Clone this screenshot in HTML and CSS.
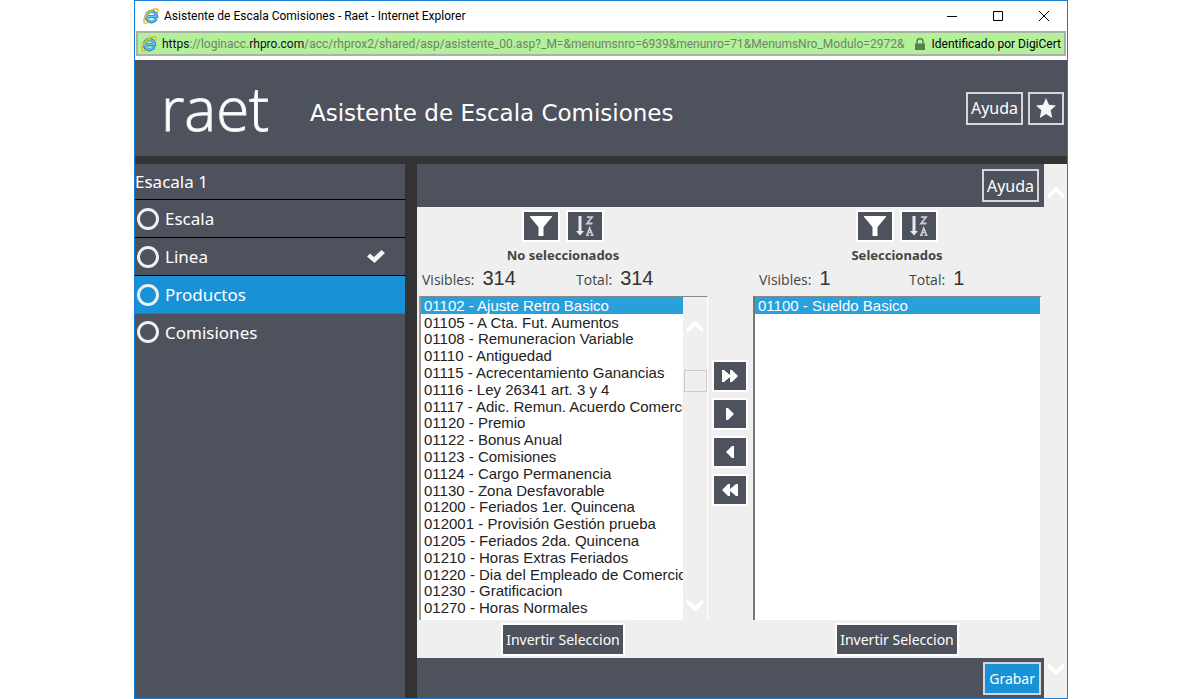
FILE: index.html
```html
<!DOCTYPE html>
<html lang="es">
<head>
<meta charset="utf-8">
<title>Asistente de Escala Comisiones - Raet</title>
<link rel="stylesheet" href="styles.css">
</head>
<body>
<svg class="defs" aria-hidden="true">
  <symbol id="ie" viewBox="0 0 16 16">
    <path d="M13.2 10.7A5.2 5.2 0 1 1 13.6 8.6H5.2" fill="none" stroke="#2b8fd0" stroke-width="3.2"/>
    <path d="M12.6 11.2A4.8 4.8 0 1 1 13.4 8.3H5" fill="none" stroke="#74c8f0" stroke-width="1.2"/>
    <path d="M1.6 14.9C-.6 12.4 3 5.600 8.200 2.500 11.600.4 14.800.2 15 2.200c.1.900-.3 1.800-.8 2.700" fill="none" stroke="#f0b71c" stroke-width="1.500"/>
    <path d="M1.600 14.900c1 .8 2.900.1 4.300-.9" fill="none" stroke="#f0b71c" stroke-width="1.300"/>
  </symbol>
  <symbol id="funnel" viewBox="0 0 22 20"><path d="M0 0H22V1L13.500 11V20H8.500V11L0 1Z" fill="#fff"/></symbol>
  <symbol id="sort" viewBox="0 0 18 20">
    <path d="M2.500 0H5.500V15H8L4 19.500 0 15H2.500Z" fill="#e6e8ec"/>
    <path d="M11 1.200h5L11 7.500h5.500" fill="none" stroke="#c9ccd2" stroke-width="1.800"/>
    <path d="M10 19.300h3M14.500 19.300h3M11 19l2.700-7 2.800 7M12 16.500h3.600" fill="none" stroke="#c9ccd2" stroke-width="1.600"/>
  </symbol>
  <symbol id="up" viewBox="0 0 16 13"><path d="M0 8.500L8 .5l8 8V13L8 6 0 13Z" fill="#fff"/></symbol>
  <symbol id="down" viewBox="0 0 16 13"><path d="M0 4.500l8 8 8-8V0L8 7 0 0Z" fill="#fff"/></symbol>
</svg>

<div class="window">
  <div class="titlebar">
    <svg class="ie"><use href="#ie"/></svg>
    <span class="caption">Asistente de Escala Comisiones - Raet - Internet Explorer</span>
    <button class="wbtn" aria-label="Minimizar"><svg viewBox="0 0 10 10"><path d="M0 5.500H10" stroke="#000"/></svg></button>
    <button class="wbtn" aria-label="Maximizar"><svg viewBox="0 0 10 10"><path d="M.5.5h9v9h-9z" fill="none" stroke="#000"/></svg></button>
    <button class="wbtn" aria-label="Cerrar"><svg viewBox="0 0 10 10"><path d="M0 0L10 10M10 0L0 10" stroke="#000"/></svg></button>
  </div>
  <div class="address">
    <svg class="ie"><use href="#ie"/></svg>
    <span class="url"><b>https</b>://loginacc.<b>rhpro.com</b>/acc/rhprox2/shared/asp/asistente_00.asp?_M=&amp;menumsnro=6939&amp;menunro=71&amp;MenumsNro_Modulo=2972&amp;</span>
    <svg class="lock" viewBox="0 0 10 12"><path d="M0 5.500h10V12H0Z" fill="#5b7f4d"/><path d="M2 6V3.500a3 2.700 0 0 1 6 0V6" fill="none" stroke="#5b7f4d" stroke-width="1.400"/></svg>
    <span class="ident">Identificado por DigiCert</span>
  </div>

  <header class="header">
    <span class="logo">raet</span>
    <h1>Asistente de Escala Comisiones</h1>
    <button class="btn">Ayuda</button>
    <button class="btn star" aria-label="Favorito"><svg viewBox="0 0 20 20"><path d="M10 0l3 6.800 7 .7-5.300 4.800L16.200 20 10 16l-6.200 4 1.500-7.700L0 7.500l7-.7Z" fill="#f6f6f8"/></svg></button>
  </header>

  <div class="frames">
    <nav class="side">
      <div class="side-title">Esacala 1</div>
      <a href="#" class="step"><i class="ring"></i>Escala</a>
      <a href="#" class="step"><i class="ring"></i>Linea<svg class="check" viewBox="0 0 18 13"><path d="M0 6.500L3 3.500 7 7 14.500 0 18 3 7.500 13Z" fill="#f2f3f5"/></svg></a>
      <a href="#" class="step active"><i class="ring"></i>Productos</a>
      <a href="#" class="step last"><i class="ring"></i>Comisiones</a>
    </nav>

    <main class="content">
      <div class="bar top"><button class="btn">Ayuda</button></div>
      <div class="panels">
        <section class="panel">
          <div class="tools">
            <button class="tool" aria-label="Filtrar"><svg class="funnel"><use href="#funnel"/></svg></button>
            <button class="tool" aria-label="Ordenar"><svg class="sort"><use href="#sort"/></svg></button>
          </div>
          <h2 id="unsel">No seleccionados</h2>
          <div class="counts"><span class="count">Visibles: <b>314</b></span><span class="count">Total: <b>314</b></span></div>
          <div class="list">
            <select multiple aria-labelledby="unsel">
              <option class="on">01102 - Ajuste Retro Basico</option>
              <option>01105 - A Cta. Fut. Aumentos</option>
              <option>01108 - Remuneracion Variable</option>
              <option>01110 - Antiguedad</option>
              <option>01115 - Acrecentamiento Ganancias</option>
              <option>01116 - Ley 26341 art. 3 y 4</option>
              <option>01117 - Adic. Remun. Acuerdo Comercio</option>
              <option>01120 - Premio</option>
              <option>01122 - Bonus Anual</option>
              <option>01123 - Comisiones</option>
              <option>01124 - Cargo Permanencia</option>
              <option>01130 - Zona Desfavorable</option>
              <option>01200 - Feriados 1er. Quincena</option>
              <option>012001 - Provisión Gestión prueba</option>
              <option>01205 - Feriados 2da. Quincena</option>
              <option>01210 - Horas Extras Feriados</option>
              <option>01220 - Dia del Empleado de Comercio</option>
              <option>01230 - Gratificacion</option>
              <option>01270 - Horas Normales</option>
              <option>01271 - Hs Extras 50%</option>
            </select>
            <div class="scroll inner"><svg class="chev"><use href="#up"/></svg><span class="thumb"></span><svg class="chev"><use href="#down"/></svg></div>
          </div>
          <button class="btn small invert">Invertir Seleccion</button>
        </section>

        <div class="moves">
          <button class="move" aria-label="Agregar todos"><svg viewBox="0 0 16 12"><path d="M0 0h2l6 5V0h2l6 6-6 6H8V7l-6 5H0Z" fill="#fff"/></svg></button>
          <button class="move" aria-label="Agregar"><svg viewBox="0 0 16 12"><path d="M4 0h2l6 6-6 6H4Z" fill="#fff"/></svg></button>
          <button class="move" aria-label="Quitar"><svg viewBox="0 0 16 12"><path d="M12 0h-2L4 6l6 6h2Z" fill="#fff"/></svg></button>
          <button class="move" aria-label="Quitar todos"><svg viewBox="0 0 16 12"><path d="M16 0h-2L8 5V0H6L0 6l6 6h2V7l6 5h2Z" fill="#fff"/></svg></button>
        </div>

        <section class="panel">
          <div class="tools">
            <button class="tool" aria-label="Filtrar"><svg class="funnel"><use href="#funnel"/></svg></button>
            <button class="tool" aria-label="Ordenar"><svg class="sort"><use href="#sort"/></svg></button>
          </div>
          <h2 id="sel">Seleccionados</h2>
          <div class="counts chosen"><span class="count">Visibles: <b>1</b></span><span class="count">Total: <b>1</b></span></div>
          <div class="list picked">
            <select multiple aria-labelledby="sel">
              <option class="on">01100 - Sueldo Basico</option>
            </select>
          </div>
          <button class="btn small invert">Invertir Seleccion</button>
        </section>
      </div>
      <div class="bar bottom"><button class="btn small save">Grabar</button></div>
    </main>
    <div class="scroll outer"><svg class="chev"><use href="#up"/></svg><svg class="chev"><use href="#down"/></svg></div>
  </div>
</div>
</body>
</html>
```

FILE: styles.css
```css
* { box-sizing: border-box; }
body {
  margin: 0;
  padding: 0 132px 0 134px;
  background: #fff;
  font-family: "Open Sans", "Noto Sans", sans-serif;
}
button { margin: 0; padding: 0; border: 0; background: none; font: inherit; }
svg { display: block; flex: none; }
.defs { position: absolute; width: 0; height: 0; }

.window {
  display: flex;
  flex-direction: column;
  min-height: 100vh;
  border: 1px solid #1a7fd4;
}

.titlebar {
  display: flex;
  align-items: center;
  height: 29px;
  padding-left: 8px;
  font-family: Roboto, sans-serif;
  font-size: 12px;
}
.ie { width: 16px; height: 16px; }
.caption { flex: 1; margin-left: 5px; }
.wbtn { display: flex; align-items: center; justify-content: center; width: 46px; height: 28px; }
.wbtn svg { width: 10px; height: 10px; overflow: visible; }

.address {
  display: flex;
  align-items: center;
  height: 25px;
  margin: 1px 1px 4px;
  padding: 0 3px;
  border: 2px solid #a9b3a4;
  background: #b2f09a;
  font-family: Roboto, sans-serif;
  font-size: 12px;
  white-space: nowrap;
}
.url { flex: 1; min-width: 0; margin-left: 5px; overflow: hidden; color: #6f8468; }
.url b { color: #111; font-weight: 400; }
.lock { width: 10px; height: 12px; margin: 0 7px 0 10px; }

.header {
  display: flex;
  align-items: center;
  height: 96px;
  padding-right: 3px;
  background: #4e525d;
  color: #fff;
}
.logo {
  width: 149px;
  margin-left: 26px;
  font-family: "Open Sans", sans-serif;
  font-size: 60px;
  font-weight: 300;
  line-height: 88px;
  -webkit-text-stroke: 1px #f0f0f2;
}
h1 { flex: 1; margin: 9px 0 0; font: 400 23px/30px "DejaVu Sans", sans-serif; white-space: nowrap; }
.btn {
  height: 33px;
  padding: 0 3px;
  border: 2px solid #d4d6da;
  background: #4e525d;
  color: #fff;
  font-family: "Noto Sans", sans-serif;
  font-size: 16px;
  white-space: nowrap;
}
.small { font-size: 14px; }
.star { display: flex; align-items: center; justify-content: center; width: 36px; margin-left: 5px; }
.star svg { width: 20px; height: 20px; }

.frames {
  display: grid;
  flex: 1;
  grid-template-columns: 270px minmax(0, 1fr) 23px;
  border-top: 8px solid #333;
  background: #efefef;
}
.side { background: #4e525d; color: #fff; font-family: "Noto Sans", sans-serif; font-size: 17px; }
.side-title { height: 36px; border-bottom: 1px solid #000; line-height: 35px; }
.step {
  display: flex;
  align-items: center;
  height: 38px;
  padding-left: 2px;
  border-bottom: 1px solid #000;
  color: #fff;
  text-decoration: none;
}
.ring { width: 22px; height: 22px; margin-right: 6px; border: 3px solid #eef0f2; border-radius: 50%; }
.check { width: 18px; height: 13px; margin: 0 20px 0 auto; }
.active { background: #1891d6; border-color: #666; }
.last { height: 36px; border: 0; }

.content { display: flex; flex-direction: column; border-left: 12px solid #333; }
.bar { display: flex; justify-content: flex-end; background: #4e525d; }
.top { height: 43px; padding: 5px 5px 0 0; }
.bottom { height: 40px; padding: 4px 3px 0 0; }
.save { padding: 0 4px; background: #1891d6; }

.panels {
  display: grid;
  flex: 1;
  grid-template-columns: minmax(0, 1fr) 44px minmax(0, 1fr);
  padding: 3px 2px 2px 1px;
  color: #444;
}
.panel { display: flex; flex-direction: column; }
.tools { display: flex; justify-content: center; gap: 6px; }
.tool, .move {
  display: flex;
  align-items: center;
  justify-content: center;
  width: 38px;
  height: 32px;
  border: 2px solid #fff;
  background: #4e525d;
}
.funnel { width: 22px; height: 20px; }
.sort { width: 18px; height: 20px; }
h2 { margin: 4px 0 0; font: 700 13px/18px "Noto Sans", sans-serif; text-align: center; }
.counts { display: grid; grid-template-columns: 154px 1fr; height: 32px; padding-left: 4px; font-size: 14px; line-height: 28px; }
.chosen { grid-template-columns: 150px 1fr; padding-left: 7px; }
.count { display: flex; align-items: baseline; gap: 8px; }
.counts b { color: #333; font: 400 20px/28px "Liberation Sans", Arial, sans-serif; }

.list {
  display: flex;
  flex: 1;
  min-height: 0;
  margin-left: 1px;
  border-top: 1px solid #888;
  border-left: 2px solid #999;
  border-right: 1px solid #fff;
}
.picked { border-left-color: #777; border-right: 2px solid #efefef; }
select {
  flex: 1;
  min-width: 0;
  height: 323px;
  margin: 0;
  padding: 0;
  overflow: hidden;
  border: 0;
  border-radius: 0;
  outline: 0;
  background: #fff;
  color: #222;
  font: 15px/17px "Liberation Sans", Arial, sans-serif;
}
option { height: 17px; min-height: 0; padding: 0 0 0 3px; line-height: 17px; }
option:nth-child(5n+2) { height: 16px; }
.on { background: #27a0dc; color: #fff; }

.scroll { display: flex; flex-direction: column; align-items: center; background: #efefef; }
.inner { width: 24px; padding: 23px 0 8px; }
.inner .chev:last-child { margin-top: auto; }
.chev { width: 16px; height: 13px; }
.thumb { width: 23px; height: 22px; margin-top: 37px; border: 1px solid #ccc; }
.outer { justify-content: space-between; padding: 22px 0; }

.moves { display: flex; flex-direction: column; align-items: center; gap: 6px; padding-top: 150px; }
.move { width: 36px; }
.move svg { width: 16px; height: 12px; }
.invert { align-self: center; height: 33px; margin-top: 3px; border-color: #fff; }
```
